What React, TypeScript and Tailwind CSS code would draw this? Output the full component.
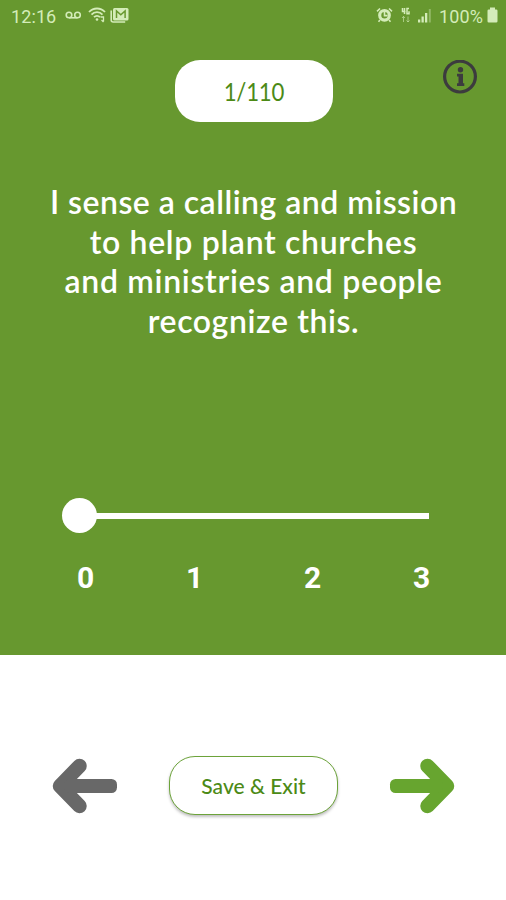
import type { ReactNode } from "react";

const QUESTION = [
  { text: "I sense a calling and mission", tracking: "tracking-[0.48px]" },
  { text: "to help plant churches", tracking: "tracking-[0.68px]" },
  { text: "and ministries and people", tracking: "tracking-[0.68px]" },
  { text: "recognize this.", tracking: "tracking-[0.6px]" },
];

function StatusBar() {
  return (
    <header className="flex h-8 items-center justify-between pr-[8px] pl-[11px] font-['Roboto',sans-serif] text-[18px] text-[#d4ecb9]">
      <div className="flex items-center">
        <span className="w-[54px] tracking-[0.1px]">12:16</span>
        {/* voicemail */}
        <svg className="h-8 w-[17px]" viewBox="0 0 17 32" fill="none" stroke="currentColor" strokeWidth="1.6">
          <circle cx="4" cy="15" r="2.8" />
          <circle cx="12.5" cy="15" r="2.8" />
          <path d="M4 17.8h8.5" />
        </svg>
        {/* wifi */}
        <svg className="ml-[6px] h-8 w-[18px]" viewBox="0 0 18 32" fill="none" stroke="currentColor" strokeWidth="1.8">
          <path d="M1 12C5.5 7.300 12.5 7.300 17 12M3.5 14.6C6.5 11.4 11.5 11.4 14.5 14.6M6 17.2C7.8 15.3 10.2 15.3 12 17.2" />
          <circle cx="9" cy="19.5" r="1.3" fill="currentColor" stroke="none" />
          <path d="M12.5 17h3v4.5M13.5 20l2 2" strokeWidth="1.3" />
        </svg>
        {/* mail */}
        <svg className="ml-[4px] h-8 w-[19px]" viewBox="0 0 19 32">
          <path d="M1.2 10.5v9.5q0 2 2 2h12" fill="none" stroke="currentColor" strokeWidth="1.6" />
          <rect x="3" y="8" width="15.5" height="12.5" rx="1.5" fill="currentColor" />
          <path d="M6.5 18v-7l4.3 3.7 4.3-3.7v7" fill="none" stroke="#67982f" strokeWidth="1.5" />
        </svg>
      </div>
      <div className="flex items-center">
        {/* alarm */}
        <svg className="h-8 w-[18px]" viewBox="0 0 18 32" fill="none" stroke="currentColor">
          <circle cx="8.5" cy="15.3" r="4.8" strokeWidth="3.2" />
          <path d="M1 11.3l3-2.8M16 11.3l-3-2.8M4 20L2.5 21.700M13 20l1.5 1.700M8.5 12v3.6h3" strokeWidth="1.6" />
        </svg>
        {/* mobile data */}
        <svg className="ml-[6px] h-8 w-[11px]" viewBox="0 0 11 32" fill="none" stroke="currentColor">
          <path d="M2.5 8v3.5h3M4.5 8v6M9 8.5H7v5.2h2v-2.5" strokeWidth="1.5" />
          <path d="M3.5 22v-5.5M2 18l1.5-1.6L5 18M8 16.5V22M6.5 20.5L8 22l1.5-1.5" strokeWidth="1" opacity=".6" />
        </svg>
        {/* signal */}
        <svg className="ml-[7px] h-8 w-[14px]" viewBox="0 0 14 32" fill="currentColor">
          <path d="M0 19.5h2.3v3H0zM3.5 16.5h2.3v6H3.5zM7 13h2.3v9.5H7z" />
          <path d="M10.8 9h2v13.5h-2z" opacity=".4" />
        </svg>
        <span className="ml-[7px] w-[48px] tracking-[0.1px]">100%</span>
        {/* battery */}
        <svg className="h-8 w-[11px]" viewBox="0 0 11 32" fill="currentColor">
          <path d="M3 7.5h5v2h1.2q1.3 0 1.3 1.3v10.4q0 1.3-1.3 1.3H1.8q-1.3 0-1.3-1.3V10.8q0-1.3 1.3-1.3H3z" />
        </svg>
      </div>
    </header>
  );
}

function InfoIcon() {
  return (
    <svg className="size-[36px]" viewBox="0 0 36 36" fill="#3c3b3e">
      <circle cx="18" cy="16.6" r="15.4" fill="none" stroke="#3c3b3e" strokeWidth="3.2" />
      <circle cx="18.5" cy="9.8" r="2.7" />
      <path d="M15 13.8h6v9.400h1.300v2.800h-7.300v-2.800h1.500v-6.600H15z" />
    </svg>
  );
}

function ArrowButton({ label, className, children }: { label: string; className: string; children: ReactNode }) {
  return (
    <button aria-label={label} className={className}>
      <svg className="h-14 w-[66px]" viewBox="0 0 66 56" fill="currentColor">
        {children}
      </svg>
    </button>
  );
}

export default function App() {
  return (
    <main className="flex h-[900px] w-[506px] flex-col overflow-hidden bg-white">
      <section className="h-[655px] bg-[#67982f]">
        <StatusBar />

        <div className="mt-[28px] grid grid-cols-[175px_158px_1fr] pr-[28px]">
          <div />
          <div className="flex h-[62px] items-center justify-center rounded-[25px] bg-white pt-px font-['Lato',sans-serif] text-[25px] tracking-[-0.3px] text-[#4c8a16]">
            <span className="scale-x-[0.89]">1/110</span>
          </div>
          <div className="flex justify-end">
            <InfoIcon />
          </div>
        </div>

        <h1 className="mt-[60px] flex h-[159px] flex-col items-center pl-px font-['Lato',sans-serif] text-[32px] leading-[39.5px] font-semibold whitespace-nowrap text-white">
          {QUESTION.map((line) => (
            <span key={line.text} className={line.tracking}>
              {line.text}
            </span>
          ))}
        </h1>

        <div className="mt-[157px] flex h-[35px] items-center pl-[62px]">
          <span className="size-[35px] rounded-full bg-white" />
          <span className="-ml-1 h-[6px] w-[336px] bg-white" />
        </div>

        <div className="mt-[27px] grid grid-cols-[109px_118px_109px_17px] pl-[77px] font-['Roboto',sans-serif] text-[30px] leading-[36px] font-bold text-white">
          <span>0</span>
          <span>1</span>
          <span>2</span>
          <span>3</span>
        </div>
      </section>

      <footer className="mt-[101px] flex h-[59px] items-center justify-between pr-[51px] pl-[52px]">
        <ArrowButton label="Previous" className="text-[#686868]">
          <path
            d="M27.5 8L8 28l19.500 20"
            fill="none"
            stroke="currentColor"
            strokeWidth="14.5"
            strokeLinecap="round"
            strokeLinejoin="round"
          />
          <rect x="12" y="21" width="53" height="14" rx="5.5" />
        </ArrowButton>
        <button className="h-[59px] w-[169px] rounded-[26px] border border-[#6ca33a] bg-white font-['Lato',sans-serif] text-[21px] font-medium text-[#4c8a16] shadow-[0_2px_3px_rgba(0,0,0,0.25)]">
          Save &amp; Exit
        </button>
        <ArrowButton label="Next" className="text-[#67a52f]">
          <path
            d="M38.5 8L58 28 38.5 48"
            fill="none"
            stroke="currentColor"
            strokeWidth="14.5"
            strokeLinecap="round"
            strokeLinejoin="round"
          />
          <rect x="1" y="21" width="53" height="14" rx="5.5" />
        </ArrowButton>
      </footer>
    </main>
  );
}
